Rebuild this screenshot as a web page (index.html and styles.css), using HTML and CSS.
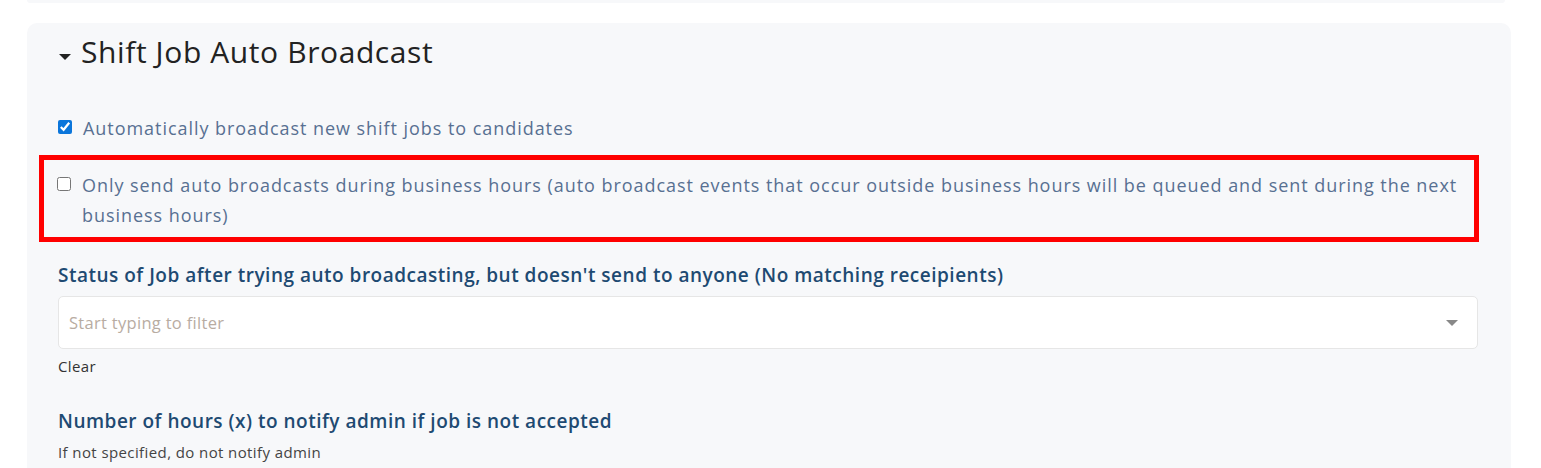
FILE: index.html
```html
<!DOCTYPE html>
<html>
<head>
<meta charset="utf-8">
<link rel="stylesheet" href="styles.css">
</head>
<body>
<div class="page">
  <div class="prev-card"></div>
  <section class="card">
    <h2 class="card-title"><span class="caret"></span>Shift Job Auto Broadcast</h2>
    <label class="check-row first">
      <input type="checkbox" checked>
      <span>Automatically broadcast new shift jobs to candidates</span>
    </label>
    <div class="highlight">
      <label class="check-row">
        <input type="checkbox">
        <span>Only send auto broadcasts during business hours (auto broadcast events that occur outside business hours will be queued and sent during the next business hours)</span>
      </label>
    </div>
    <div class="field">
      <div class="field-label">Status of Job after trying auto broadcasting, but doesn't send to anyone (No matching receipients)</div>
      <div class="select">
        <span class="placeholder">Start typing to filter</span>
        <span class="select-arrow"></span>
      </div>
      <div class="clear">Clear</div>
    </div>
    <div class="field second">
      <div class="field-label">Number of hours (x) to notify admin if job is not accepted</div>
      <div class="help">If not specified, do not notify admin</div>
    </div>
  </section>
</div>
</body>
</html>
```
FILE: styles.css
```css
* { box-sizing: border-box; }
html, body { margin: 0; padding: 0; background: #ffffff; }
body {
  font-family: "Open Sans", "Liberation Sans", sans-serif;
  overflow: hidden;
  height: 468px;
}
.page {
  padding: 0 30px 0 27px;
}
.prev-card {
  height: 3px;
  background: #f7f8fa;
  border-radius: 0 0 10px 10px;
  margin-right: 6px;
}
.card {
  margin-top: 20px;
  background: #f7f8fa;
  border-radius: 10px 10px 0 0;
  padding: 9px 33px 40px 31px;
  min-height: 600px;
}
.card-title {
  margin: 0;
  display: flex;
  align-items: center;
  font-size: 30px;
  font-weight: 400;
  color: #222222;
  line-height: 40px;
  letter-spacing: 0.6px;
}
.caret {
  width: 0;
  height: 0;
  border-left: 6px solid transparent;
  border-right: 6px solid transparent;
  border-top: 6px solid #222222;
  margin: 10px 10px 0 1px;
}
.check-row {
  display: flex;
  align-items: flex-start;
  font-size: 18px;
  line-height: 30px;
  letter-spacing: 0.95px;
  color: #587092;
}
.check-row input {
  width: 14px;
  height: 14px;
  margin: 7px 11px 0 0;
  flex: none;
  accent-color: #0b76db;
}
.check-row.first {
  margin-top: 41px;
}
.highlight {
  margin: 12px -1px 0 -19px;
  border: 5px solid #ff0000;
  padding: 10px 2px 7px 13px;
}
.field {
  margin-top: 20px;
}
.field-label {
  font-size: 19px;
  font-weight: 600;
  color: #1e4a72;
  line-height: 26px;
  letter-spacing: 0.5px;
}
.select {
  margin-top: 8px;
  height: 53px;
  background: #ffffff;
  border: 1px solid #e6e6e6;
  border-radius: 5px;
  display: flex;
  align-items: center;
  justify-content: space-between;
  padding: 0 19px 0 10px;
}
.placeholder {
  font-size: 16.5px;
  letter-spacing: 0.3px;
  color: #b8aca2;
}
.select-arrow {
  width: 0;
  height: 0;
  border-left: 6px solid transparent;
  border-right: 6px solid transparent;
  border-top: 6px solid #888888;
}
.clear {
  margin-top: 6px;
  font-size: 15px;
  letter-spacing: 0.4px;
  color: #333333;
  line-height: 22px;
}
.field.second {
  margin-top: 31px;
}
.help {
  margin-top: 8px;
  font-size: 15px;
  letter-spacing: 0.4px;
  color: #444444;
  line-height: 20px;
}
```
